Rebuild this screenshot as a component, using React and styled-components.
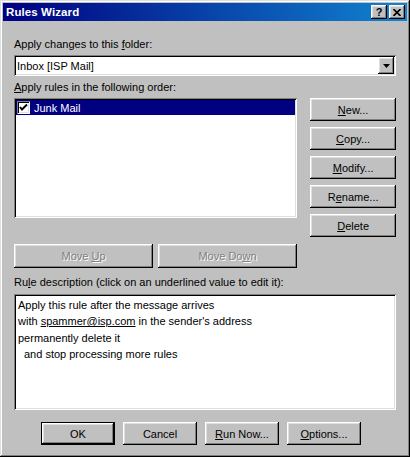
import React from "react";
import styled, { createGlobalStyle, css } from "styled-components";

const GlobalStyle = createGlobalStyle`
  html, body {
    margin: 0;
    padding: 0;
    background: #c0c0c0;
  }
`;

const raised = css`
  background: #c0c0c0;
  box-shadow: inset -1px -1px #000, inset 1px 1px #fff, inset -2px -2px #808080,
    inset 2px 2px #dfdfdf;
`;

const sunken = css`
  background: #fff;
  box-shadow: inset 1px 1px #808080, inset -1px -1px #fff, inset 2px 2px #000,
    inset -2px -2px #dfdfdf;
`;

const Window = styled.div`
  width: 410px;
  height: 457px;
  box-sizing: border-box;
  padding: 3px;
  background: #c0c0c0;
  box-shadow: inset -1px -1px #000, inset 1px 1px #dfdfdf, inset -2px -2px #808080,
    inset 2px 2px #fff;
  display: flex;
  flex-direction: column;
  font-family: "Liberation Sans", Arial, sans-serif;
  font-size: 11px;
  color: #000;
`;

const TitleBar = styled.div`
  height: 18px;
  display: flex;
  align-items: center;
  gap: 2px;
  padding: 0 2px 0 3px;
  background: linear-gradient(to right, #000080, #1084d0);
  color: #fff;
`;

const Title = styled.div`
  flex: 1;
  font-weight: bold;
  font-size: 11.5px;
  letter-spacing: 0.1px;
`;

const CaptionButton = styled.div`
  ${raised};
  width: 16px;
  height: 14px;
  display: flex;
  align-items: center;
  justify-content: center;
  color: #000;
  font-weight: bold;
  font-size: 11px;
  line-height: 14px;
`;

const Body = styled.div`
  flex: 1;
  display: flex;
  flex-direction: column;
  padding: 17px 11px 0 11px;
`;

const Label = styled.div`
  height: 13px;
  line-height: 13px;
  margin-top: ${(p) => p.$mt || 0}px;
`;

const Combo = styled.div`
  ${sunken};
  margin-top: 4px;
  height: 21px;
  box-sizing: border-box;
  padding: 2px;
  display: flex;
  align-items: center;
`;

const ComboText = styled.div`
  flex: 1;
  padding-left: 1px;
`;

const DropButton = styled.div`
  ${raised};
  width: 16px;
  height: 17px;
  display: flex;
  align-items: center;
  justify-content: center;
`;

const MainRow = styled.div`
  margin-top: 4px;
  display: flex;
  gap: 13px;
`;

const LeftColumn = styled.div`
  width: 284px;
  display: flex;
  flex-direction: column;
`;

const ListBox = styled.div`
  ${sunken};
  height: 120px;
  box-sizing: border-box;
  padding: 2px;
`;

const ListRow = styled.div`
  height: 15px;
  display: flex;
  align-items: center;
  gap: 4px;
  padding-left: 1px;
  background: ${(p) => (p.$selected ? "#000080" : "transparent")};
  color: ${(p) => (p.$selected ? "#fff" : "#000")};
`;

const CheckBox = styled.div`
  ${sunken};
  width: 13px;
  height: 13px;
  display: flex;
  align-items: center;
  justify-content: center;
`;

const MoveRow = styled.div`
  margin-top: 26px;
  display: flex;
  gap: 5px;
`;

const ButtonColumn = styled.div`
  width: 86px;
  display: flex;
  flex-direction: column;
  gap: 6px;
`;

const Button = styled.button`
  ${raised};
  width: ${(p) => p.$width || "100%"};
  height: ${(p) => p.$height || 23}px;
  box-sizing: border-box;
  border: ${(p) => (p.$default ? "1px solid #000" : "none")};
  padding: 0;
  font-family: inherit;
  font-size: 11px;
  color: #000;
  cursor: default;

  &:disabled {
    color: #808080;
    text-shadow: 1px 1px #fff;
  }
`;

const DescBox = styled.div`
  ${sunken};
  margin-top: 5px;
  height: 116px;
  box-sizing: border-box;
  padding: 3px 4px 2px;
  line-height: 16.3px;
`;

const DescLine = styled.div`
  padding-left: ${(p) => p.$indent || 0}px;
`;

const ValueLink = styled.span`
  text-decoration: underline;
`;

const Footer = styled.div`
  margin-top: 12px;
  padding-left: 27px;
  display: flex;
  gap: 8px;
`;

const Check = () => (
  <svg width="9" height="9" viewBox="0 0 9 9">
    <path d="M1 4 L3 6.5 L8 1.5" fill="none" stroke="#000" strokeWidth="2" />
  </svg>
);

const Arrow = () => (
  <svg width="7" height="4" viewBox="0 0 7 4">
    <polygon points="0,0 7,0 3.5,4" fill="#000" />
  </svg>
);

const CloseGlyph = () => (
  <svg width="8" height="7" viewBox="0 0 8 7">
    <path d="M0.5 0 L7.5 7 M7.5 0 L0.5 7" stroke="#000" strokeWidth="1.6" />
  </svg>
);

export default function App() {
  return (
    <>
      <GlobalStyle />
      <Window>
        <TitleBar>
          <Title>Rules Wizard</Title>
          <CaptionButton>?</CaptionButton>
          <CaptionButton>
            <CloseGlyph />
          </CaptionButton>
        </TitleBar>
        <Body>
          <Label>
            Apply changes to this <u>f</u>older:
          </Label>
          <Combo>
            <ComboText>Inbox [ISP Mail]</ComboText>
            <DropButton>
              <Arrow />
            </DropButton>
          </Combo>
          <Label $mt={5}>
            <u>A</u>pply rules in the following order:
          </Label>
          <MainRow>
            <LeftColumn>
              <ListBox>
                <ListRow $selected>
                  <CheckBox>
                    <Check />
                  </CheckBox>
                  Junk Mail
                </ListRow>
              </ListBox>
              <MoveRow>
                <Button $width="139px" $height={24} disabled>
                  Move <u>U</u>p
                </Button>
                <Button $width="139px" $height={24} disabled>
                  Move Do<u>w</u>n
                </Button>
              </MoveRow>
            </LeftColumn>
            <ButtonColumn>
              <Button>
                <u>N</u>ew...
              </Button>
              <Button>
                <u>C</u>opy...
              </Button>
              <Button>
                <u>M</u>odify...
              </Button>
              <Button>
                R<u>e</u>name...
              </Button>
              <Button>
                <u>D</u>elete
              </Button>
            </ButtonColumn>
          </MainRow>
          <Label $mt={8}>
            Ru<u>l</u>e description (click on an underlined value to edit it):
          </Label>
          <DescBox>
            <DescLine>Apply this rule after the message arrives</DescLine>
            <DescLine>
              with <ValueLink>spammer@isp.com</ValueLink> in the sender's address
            </DescLine>
            <DescLine>permanently delete it</DescLine>
            <DescLine $indent={6}>and stop processing more rules</DescLine>
          </DescBox>
          <Footer>
            <Button $width="74px" $default>
              OK
            </Button>
            <Button $width="74px">Cancel</Button>
            <Button $width="74px">
              <u>R</u>un Now...
            </Button>
            <Button $width="74px">
              <u>O</u>ptions...
            </Button>
          </Footer>
        </Body>
      </Window>
    </>
  );
}
